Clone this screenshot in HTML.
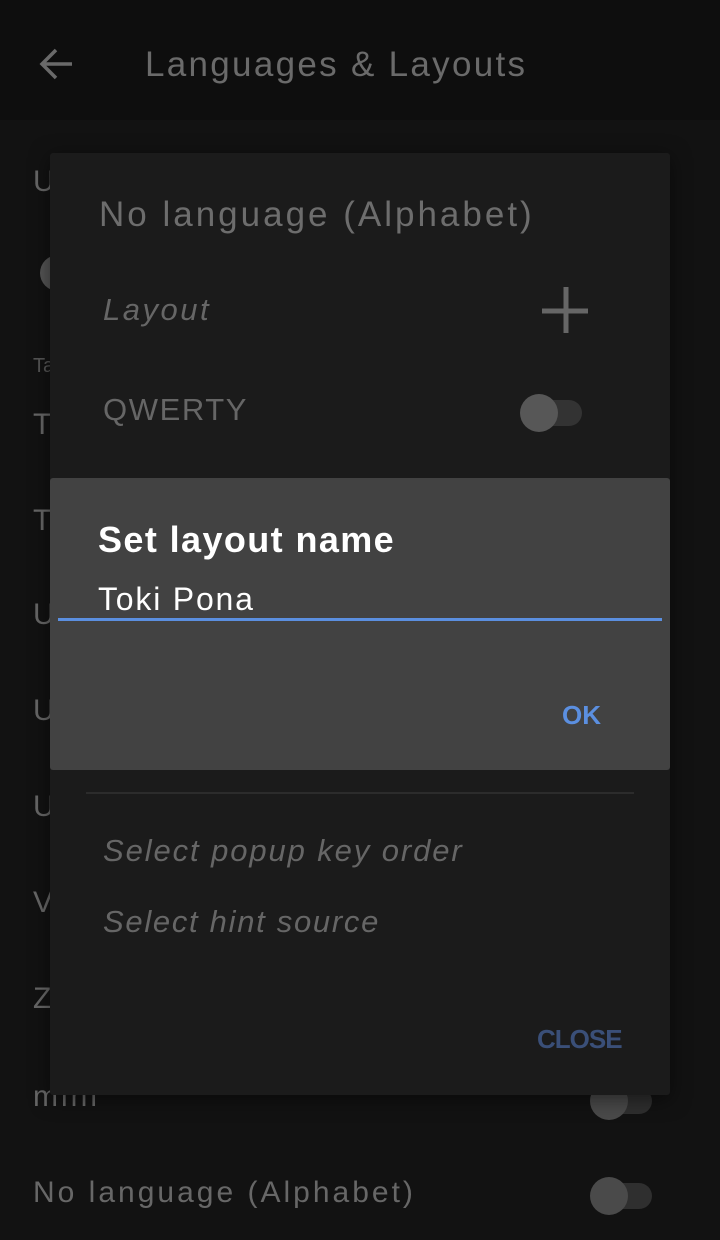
<!DOCTYPE html>
<html><head><style>
body{margin:0;width:720px;height:1240px;background:#121212;position:relative;overflow:hidden;font-family:"Liberation Sans",sans-serif;}
.a{position:absolute;white-space:nowrap;}
.bg{color:#676767;font-size:30px;}
.tog{position:absolute;width:60px;height:26px;}
.tog .t{position:absolute;left:10px;top:3px;width:52px;height:26px;border-radius:13px;background:#2f2f2f;}
.tog .k{position:absolute;left:0;top:-3px;width:38px;height:38px;border-radius:50%;background:#4a4a4a;}
</style></head><body>
<div class="a" style="left:0;top:0;width:720px;height:120px;background:#0e0e0e"></div>
<svg class="a" style="left:38px;top:46px" width="36" height="36" viewBox="0 0 36 36"><path d="M34 18H5M18 4L4 18l14 14" stroke="#6a6a6a" stroke-width="3.5" fill="none"/></svg>
<div class="a" style="left:145px;top:45px;font-size:35px;color:#6a6a6a;letter-spacing:2.3px">Languages &amp; Layouts</div>

<div class="a bg" style="left:33px;top:165px">U</div>
<div class="a" style="left:40px;top:255px;width:36px;height:36px;border-radius:50%;background:#555"></div>
<div class="a" style="left:33px;top:355px;font-size:20px;color:#555">Ta</div>
<div class="a bg" style="left:33px;top:408px">T</div>
<div class="a bg" style="left:33px;top:504px">T</div>
<div class="a bg" style="left:33px;top:598px">U</div>
<div class="a bg" style="left:33px;top:694px">U</div>
<div class="a bg" style="left:33px;top:790px">U</div>
<div class="a bg" style="left:33px;top:886px">V</div>
<div class="a bg" style="left:33px;top:982px">Z</div>
<div class="a bg" style="left:33px;top:1080px;letter-spacing:3px">mini</div>
<div class="tog" style="left:590px;top:1085px"><div class="t"></div><div class="k"></div></div>
<div class="a bg" style="left:33px;top:1176px;letter-spacing:3px">No language (Alphabet)</div>
<div class="tog" style="left:590px;top:1180px"><div class="t"></div><div class="k"></div></div>

<div class="a" style="left:50px;top:153px;width:620px;height:942px;background:#1b1b1b;border-radius:3px;box-shadow:0 4px 20px rgba(0,0,0,.5)"></div>
<div class="a" style="left:99px;top:195px;font-size:35px;color:#6d6d6d;letter-spacing:3px">No language (Alphabet)</div>
<div class="a" style="left:103px;top:292px;font-size:31px;color:#666;font-style:italic;letter-spacing:2.5px">Layout</div>
<svg class="a" style="left:540px;top:285px" width="50" height="50"><path d="M26 2v46M2 26h46" stroke="#666" stroke-width="5"/></svg>
<div class="a" style="left:103px;top:392px;font-size:31px;color:#666;letter-spacing:1.6px">QWERTY</div>
<div class="tog" style="left:520px;top:397px"><div class="t" style="background:#333"></div><div class="k" style="background:#575757"></div></div>
<div class="a" style="left:86px;top:792px;width:548px;height:2px;background:#2c2c2c"></div>
<div class="a" style="left:103px;top:833px;font-size:31px;color:#666;font-style:italic;letter-spacing:1.9px">Select popup key order</div>
<div class="a" style="left:103px;top:904px;font-size:31px;color:#666;font-style:italic;letter-spacing:1.7px">Select hint source</div>
<div class="a" style="left:537px;top:1024px;font-size:26px;color:#3a4f78;font-weight:bold;letter-spacing:-1px">CLOSE</div>

<div class="a" style="left:50px;top:478px;width:620px;height:292px;background:#424242;border-radius:3px"></div>
<div class="a" style="left:98px;top:519px;font-size:36px;color:#fff;font-weight:bold;letter-spacing:1.4px">Set layout name</div>
<div class="a" style="left:98px;top:581px;font-size:32px;color:#fff;letter-spacing:1.8px">Toki Pona</div>
<div class="a" style="left:58px;top:618px;width:604px;height:3px;background:#5b8fe0"></div>
<div class="a" style="left:562px;top:700px;font-size:26px;color:#5b8fe0;font-weight:bold">OK</div>
</body></html>
